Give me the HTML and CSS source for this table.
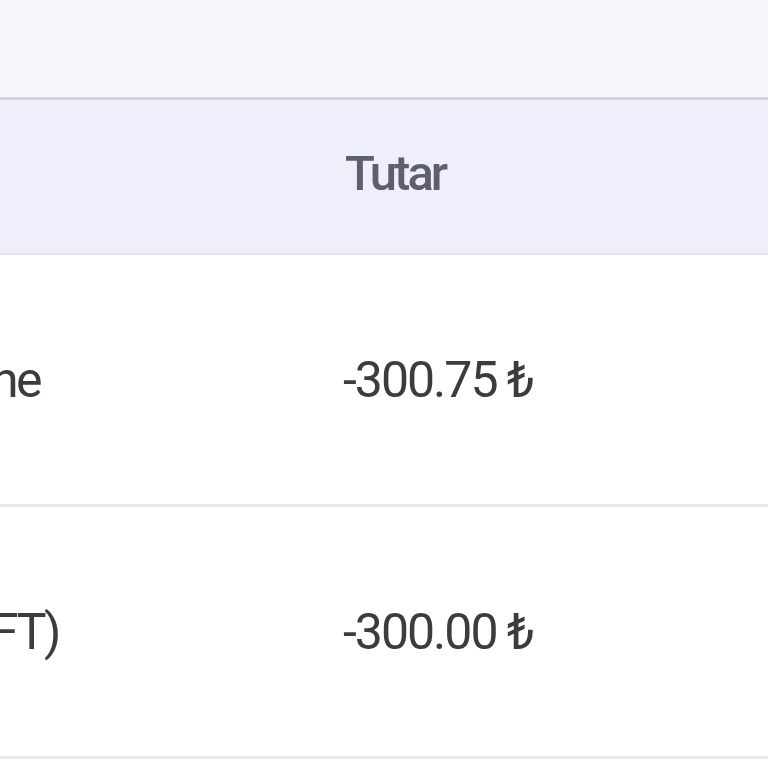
FILE: index.html
```html
<!DOCTYPE html>
<html lang="tr">
<head>
<meta charset="utf-8">
<title>Tutar</title>
<link rel="stylesheet" href="styles.css">
</head>
<body>
<div class="page">
  <div class="topbar"></div>
  <div class="table">
    <div class="row head">
      <div class="cell first"></div>
      <div class="cell amount">Tutar</div>
    </div>
    <div class="row body">
      <div class="cell first">ne</div>
      <div class="cell amount">-300.75 ₺</div>
    </div>
    <div class="row body">
      <div class="cell first">FT)</div>
      <div class="cell amount">-300.00 ₺</div>
    </div>
  </div>
</div>
</body>
</html>
```
FILE: styles.css
```css
html, body {
  margin: 0;
  padding: 0;
  background: #ffffff;
  overflow: hidden;
}
.page {
  width: 768px;
  height: 768px;
  display: flex;
  flex-direction: column;
  font-family: Roboto, "Noto Sans", sans-serif;
}
.topbar {
  height: 97px;
  background: #f7f8fc;
  border-bottom: 3px solid #d2d3db;
  flex: none;
}
.table {
  display: flex;
  flex-direction: column;
}
.row {
  display: grid;
  grid-template-columns: 343px 1fr;
  align-items: center;
}
.head {
  height: 153px;
  background: #efeffb;
  border-bottom: 2px solid #e2e2ee;
  color: #5d5f70;
  font-weight: 500;
}
.body {
  height: 249px;
  background: #ffffff;
  border-bottom: 3px solid #e8e8e8;
  color: #3c3c3c;
  font-weight: 400;
}
.cell {
  font-size: 50px;
  letter-spacing: -2px;
  white-space: nowrap;
}
.body .first {
  margin-left: -9px;
  letter-spacing: -2.5px;
}
.head .amount {
  padding-left: 2px;
  padding-bottom: 6px;
  letter-spacing: -3px;
  font-size: 49px;
}
```
